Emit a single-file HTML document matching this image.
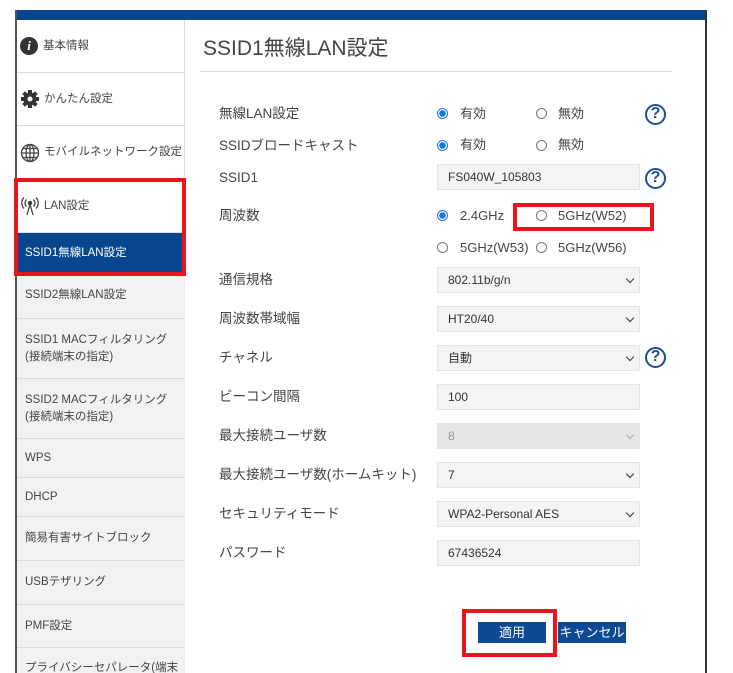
<!DOCTYPE html>
<html><head><meta charset="utf-8"><style>
*{margin:0;padding:0;box-sizing:border-box}
html,body{width:733px;height:673px;overflow:hidden}
body{background:#fff;position:relative;font-family:"Liberation Sans","Noto Sans CJK JP",sans-serif;color:#444}
.a{position:absolute}
.frame{left:15px;top:10px;width:692px;height:663px;border-left:2px solid #555;border-right:2px solid #333}
.top{left:15px;top:10px;width:692px;height:10px;background:#08458f}
.side{left:17px;top:20px;width:168px;height:653px;border-right:1px solid #ddd}
.it{position:absolute;left:17px;width:168px;font-size:11.5px;color:#444;border-bottom:1px solid #ddd;display:flex;align-items:center;padding-left:8px;line-height:17px;overflow:hidden}
.g{background:#f2f2f2}
.lbl{position:absolute;left:219px;font-size:13.5px;color:#444;line-height:16px}
.inp{position:absolute;left:437px;width:203px;height:26px;background:#f4f4f4;border:1px solid #e4e4e4;font-size:12px;color:#333;padding-left:10px;line-height:24px}
.sel::after{content:"";position:absolute;right:6px;top:8px;width:5px;height:5px;border-right:1.5px solid #333;border-bottom:1.5px solid #333;transform:rotate(45deg)}
.dis{background:#e6e6e6;color:#999}
.dis::after{border-color:#aaa}
.r{position:absolute;width:11px;height:11px;border:1px solid #777;border-radius:50%;background:#fff}
.r.on{border:1px solid #1a73e8;background:radial-gradient(circle,#1a73e8 3px,#fff 3.5px)}
.rt{position:absolute;font-size:13px;color:#444;line-height:16px}
.help{position:absolute;left:645px;width:21px;height:21px;border:2.5px solid #1d4f91;border-radius:50%;color:#1d4f91;font-weight:bold;font-size:16px;text-align:center;line-height:16px}
.red{position:absolute;border:4px solid #e8151d}
.btn{position:absolute;top:622px;height:21px;background:#0e4a94;color:#fff;font-size:13px;text-align:center;line-height:21px}
</style></head><body>
<div class="a top"></div>
<div class="a frame"></div>
<div class="a side"></div>
<div class="it" style="top:20px;height:53px;padding-left:3px"><span style="display:inline-block;width:18px;height:18px;border-radius:50%;background:#333;color:#fff;font:italic bold 13px 'Liberation Serif';text-align:center;line-height:18px;margin-right:5px">i</span>基本情報</div>
<div class="it" style="top:73px;height:53px;padding-left:3px"><svg width="20" height="20" viewBox="0 0 20 20" style="margin-right:4px"><g fill="#333"><circle cx="10" cy="10" r="6.5"/><rect x="8" y="1" width="4" height="18"/><rect x="1" y="8" width="18" height="4"/><rect x="8" y="1" width="4" height="18" transform="rotate(45 10 10)"/><rect x="8" y="1" width="4" height="18" transform="rotate(-45 10 10)"/></g><circle cx="10" cy="10" r="2.5" fill="#fff"/></svg>かんたん設定</div>
<div class="it" style="top:126px;height:54px;padding-left:3px"><svg width="20" height="20" viewBox="0 0 20 20" style="margin-right:4px" fill="none" stroke="#444" stroke-width="1.3"><circle cx="10" cy="10" r="8.5"/><ellipse cx="10" cy="10" rx="4" ry="8.5"/><line x1="10" y1="1.5" x2="10" y2="18.5"/><line x1="1.5" y1="10" x2="18.5" y2="10"/><line x1="3" y1="5.5" x2="17" y2="5.5"/><line x1="3" y1="14.5" x2="17" y2="14.5"/></svg>モバイルネットワーク設定</div>
<div class="it" style="top:180px;height:53px;padding-left:3px;background:#fff"><svg width="20" height="20" viewBox="0 0 20 20" style="margin-right:4px" fill="none" stroke="#444" stroke-width="1.3"><circle cx="10" cy="7" r="1.6" fill="#444"/><path d="M10 8 L7 19 M10 8 L13 19"/><path d="M6.5 3.5a5 5 0 0 0 0 7M13.5 3.5a5 5 0 0 1 0 7M4 1.5a8 8 0 0 0 0 11M16 1.5a8 8 0 0 1 0 11"/></svg>LAN設定</div>
<div class="it" style="top:233px;height:40px;background:#08458f;color:#fff;border:none">SSID1無線LAN設定</div>
<div class="it g" style="top:273px;height:46px">SSID2無線LAN設定</div>
<div class="it g" style="top:319px;height:60px">SSID1 MACフィルタリング<br>(接続端末の指定)</div>
<div class="it g" style="top:379px;height:60px">SSID2 MACフィルタリング<br>(接続端末の指定)</div>
<div class="it g" style="top:439px;height:39px">WPS</div>
<div class="it g" style="top:478px;height:39px">DHCP</div>
<div class="it g" style="top:517px;height:44px">簡易有害サイトブロック</div>
<div class="it g" style="top:561px;height:44px">USBテザリング</div>
<div class="it g" style="top:605px;height:43px">PMF設定</div>
<div class="it g" style="top:648px;height:25px;align-items:flex-start;padding-top:12px;border:none">プライバシーセパレータ(端末</div>
<div class="red" style="left:14px;top:178px;width:172px;height:98px"></div>

<div class="a" style="left:203px;top:32px;font-size:21px;color:#444">SSID1無線LAN設定</div>
<div class="a" style="left:200px;top:71px;width:472px;height:1px;background:#ddd"></div>

<div class="lbl" style="top:106px">無線LAN設定</div>
<div class="r on" style="left:437px;top:108px"></div><div class="rt" style="left:460px;top:106px">有効</div>
<div class="r" style="left:536px;top:108px"></div><div class="rt" style="left:558px;top:106px">無効</div>
<div class="help" style="top:104px">?</div>

<div class="lbl" style="top:138px">SSIDブロードキャスト</div>
<div class="r on" style="left:437px;top:140px"></div><div class="rt" style="left:460px;top:137px">有効</div>
<div class="r" style="left:536px;top:140px"></div><div class="rt" style="left:558px;top:137px">無効</div>

<div class="lbl" style="top:170px">SSID1</div>
<div class="inp" style="top:164px">FS040W_105803</div>
<div class="help" style="top:168px">?</div>

<div class="lbl" style="top:208px">周波数</div>
<div class="r on" style="left:437px;top:210px"></div><div class="rt" style="left:460px;top:208px">2.4GHz</div>
<div class="r" style="left:536px;top:210px"></div><div class="rt" style="left:558px;top:208px">5GHz(W52)</div>
<div class="red" style="left:513px;top:203px;width:141px;height:28px"></div>
<div class="r" style="left:437px;top:242px"></div><div class="rt" style="left:460px;top:240px">5GHz(W53)</div>
<div class="r" style="left:536px;top:242px"></div><div class="rt" style="left:558px;top:240px">5GHz(W56)</div>

<div class="lbl" style="top:272px">通信規格</div>
<div class="inp sel" style="top:267px">802.11b/g/n</div>
<div class="lbl" style="top:311px">周波数帯域幅</div>
<div class="inp sel" style="top:306px">HT20/40</div>
<div class="lbl" style="top:350px">チャネル</div>
<div class="inp sel" style="top:345px">自動</div>
<div class="help" style="top:347px">?</div>
<div class="lbl" style="top:389px">ビーコン間隔</div>
<div class="inp" style="top:384px">100</div>
<div class="lbl" style="top:428px">最大接続ユーザ数</div>
<div class="inp sel dis" style="top:423px">8</div>
<div class="lbl" style="top:467px">最大接続ユーザ数(ホームキット)</div>
<div class="inp sel" style="top:462px">7</div>
<div class="lbl" style="top:506px">セキュリティモード</div>
<div class="inp sel" style="top:501px">WPA2-Personal AES</div>
<div class="lbl" style="top:545px">パスワード</div>
<div class="inp" style="top:540px">67436524</div>

<div class="btn" style="left:478px;width:68px">適用</div>
<div class="btn" style="left:558px;width:68px">キャンセル</div>
<div class="red" style="left:462px;top:609px;width:95px;height:48px"></div>
</body></html>
